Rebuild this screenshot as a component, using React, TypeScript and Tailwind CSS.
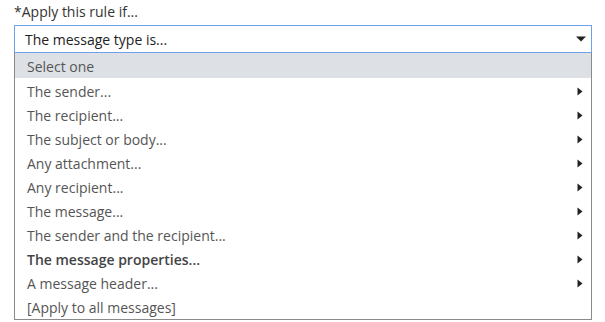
const options = [
  { label: 'Select one', sub: false, active: true },
  { label: 'The sender...', sub: true },
  { label: 'The recipient...', sub: true },
  { label: 'The subject or body...', sub: true },
  { label: 'Any attachment...', sub: true },
  { label: 'Any recipient...', sub: true },
  { label: 'The message...', sub: true },
  { label: 'The sender and the recipient...', sub: true },
  { label: 'The message properties...', sub: true, bold: true },
  { label: 'A message header...', sub: true },
  { label: '[Apply to all messages]', sub: false },
];

function RightCaret() {
  return (
    <svg width="6" height="9" viewBox="0 0 6 9" className="fill-[#222]">
      <path d="M0.5 0.5 L5.5 4.5 L0.5 8.5 Z" />
    </svg>
  );
}

function DownCaret() {
  return (
    <svg width="10" height="6" viewBox="0 0 10 6" className="fill-[#222]">
      <path d="M0 0.5 H10 L5 5.5 Z" />
    </svg>
  );
}

export default function App() {
  return (
    <div className="w-[605px] h-[322px] overflow-hidden bg-white font-['Segoe_UI','Open_Sans',sans-serif] text-[14px]">
      <div className="relative px-[14px] pt-[1px] w-[606px]">
        <div className="text-[#333] leading-[22px] h-[24px]">*Apply this rule if...</div>

        {/* select */}
        <div className="h-[28px] border border-[#6fa0ec] flex items-center justify-between pl-[10px] pr-[5px] w-[578px]">
          <span className="text-[#222] pt-[1px]">The message type is...</span>
          <DownCaret />
        </div>

        <div className="mt-[264px] text-[#333] leading-[22px]">*Do the following...</div>

        {/* dropdown list */}
        <div className="absolute left-[14px] top-[53px] w-[578px] bg-white border-l border-r border-b border-[#8a8a8a] pb-[1px]">
          {options.map((o, i) => (
            <div
              key={o.label}
              className={`flex items-center justify-between pl-[12px] pr-[8px] ${i === 0 ? 'h-[25px] pt-[1px]' : 'h-[24px] pt-[2px]'} ${o.active ? 'bg-[#dde1e6]' : ''}`}
            >
              <span className={o.bold ? 'font-semibold text-[#444]' : 'text-[#555]'}>{o.label}</span>
              {o.sub && <RightCaret />}
            </div>
          ))}
        </div>
      </div>
    </div>
  );
}
